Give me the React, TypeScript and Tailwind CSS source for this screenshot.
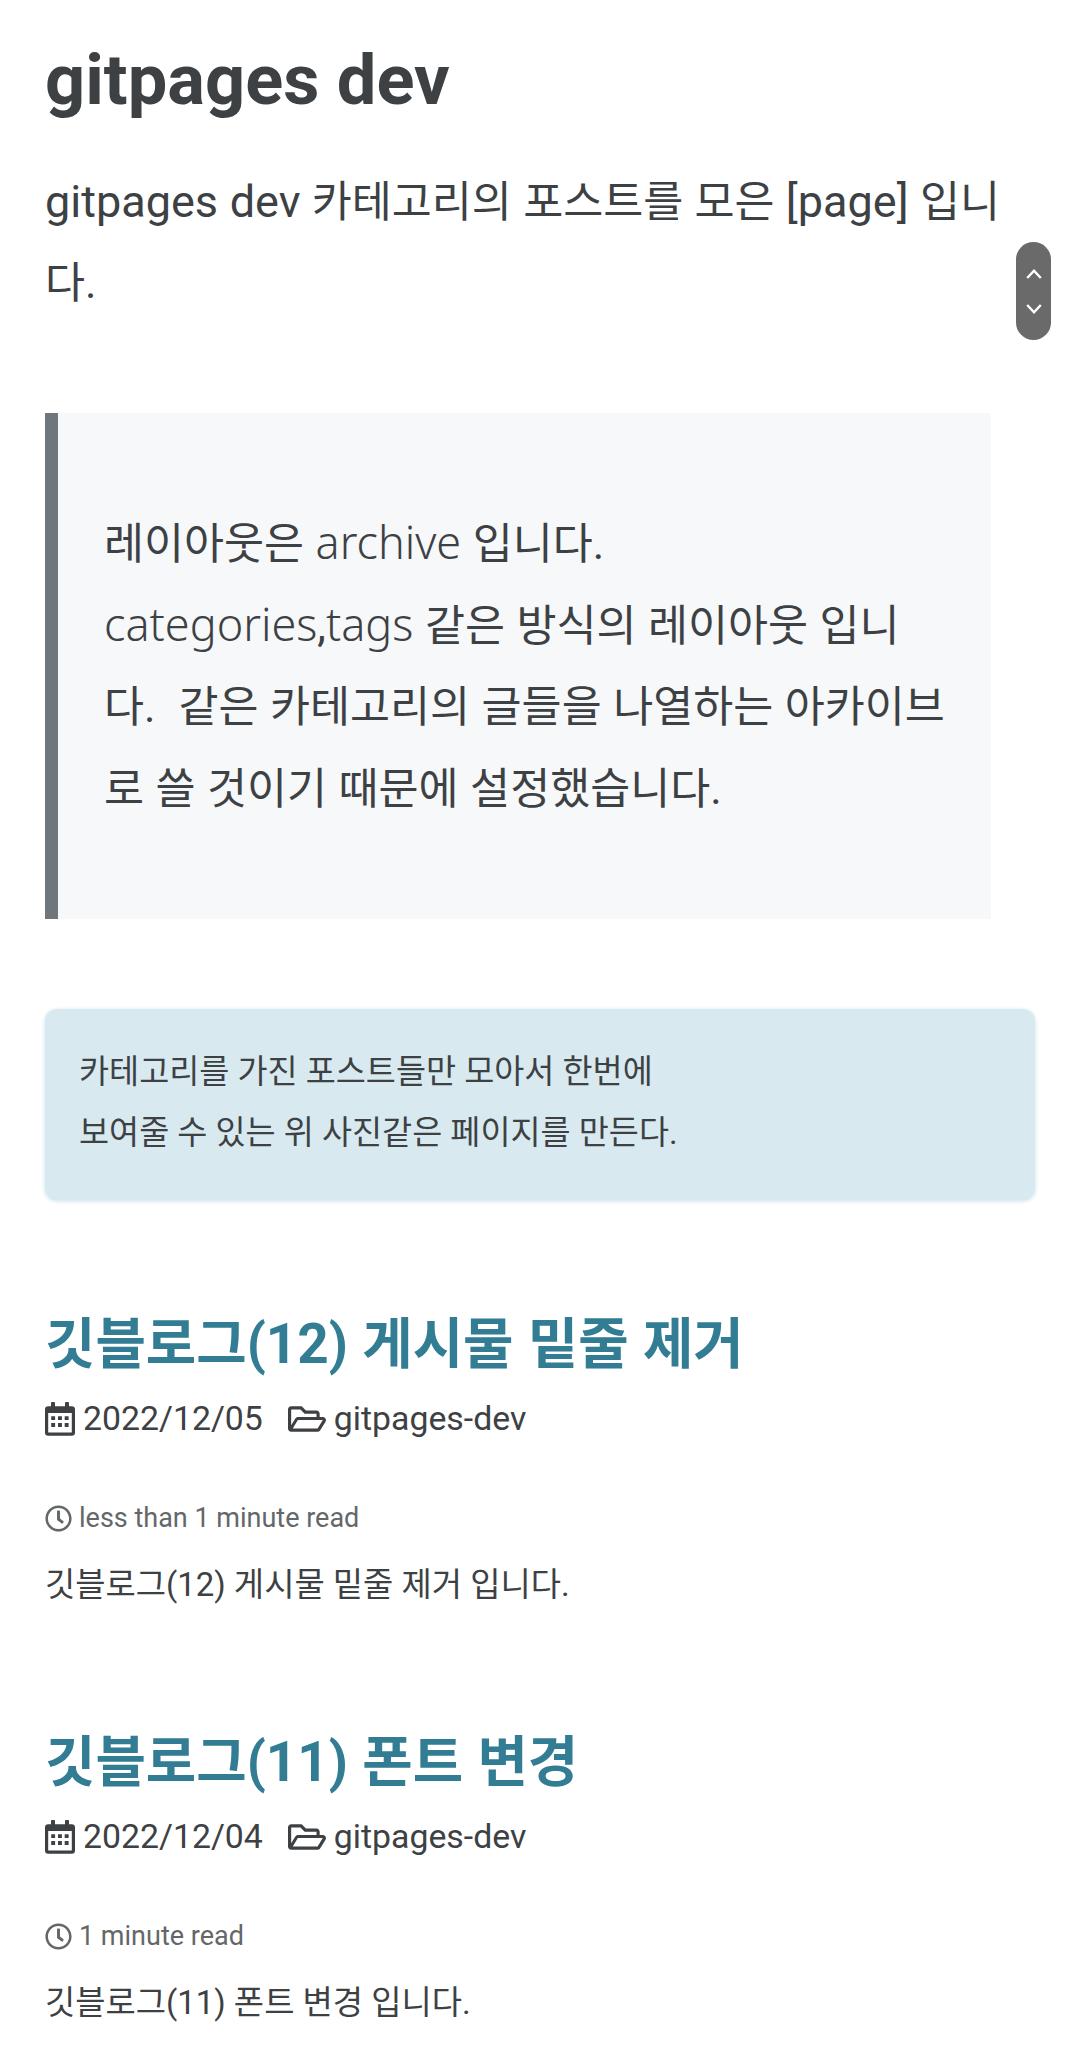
import React from 'react';
import { FaRegFolderOpen, FaRegClock } from 'react-icons/fa';

function CalendarIcon({ className }: { className?: string }) {
  return (
    <svg className={className} viewBox="0 0 30 34" fill="currentColor">
      <path
        fillRule="evenodd"
        d="M6 1Q6 0 7 0H9Q10 0 10 1V4.3H20V1Q20 0 21 0H23Q24 0 24 1V4.3H26.8Q30 4.3 30 7.5V30.6Q30 33.8 26.8 33.8H3.2Q0 33.8 0 30.6V7.5Q0 4.3 3.2 4.3H6ZM3.2 11V30Q3.2 30.6 3.8 30.6H26.2Q26.8 30.6 26.8 30V11Z"
      />
      <path d="M6.2 14.2h3.9v3.9H6.2zM13 14.2h3.9v3.9H13zM19.7 14.2h3.9v3.9h-3.9zM6.2 21h3.9v3.9H6.2zM13 21h3.9v3.9H13zM19.7 21h3.9v3.9h-3.9z" />
    </svg>
  );
}

function Post({ title, date, read, text }: { title: string; date: string; read: string; text: string }) {
  return (
    <article className="h-[418px]">
      <h2 className="whitespace-nowrap text-[54.8px] leading-[64px] font-bold text-[#327d94] [word-spacing:0.7px]">{title}</h2>
      <div className="mt-[23px] flex h-[40px] items-center whitespace-nowrap text-[33.8px] leading-[40px]">
        <CalendarIcon className="mr-[8px] h-[34px] w-[30px]" />
        <span>{date}</span>
        <FaRegFolderOpen className="mr-[8px] ml-[25px] size-[38px]" />
        <span>gitpages-dev</span>
      </div>
      <div className="mt-[61px] flex h-[36px] items-center whitespace-nowrap text-[27px] text-[#646769]">
        <FaRegClock className="mr-[7px] size-[27px]" />
        <span>{read}</span>
      </div>
      <p className="mt-[27px] whitespace-nowrap text-[32.9px] leading-[44px]">{text}</p>
    </article>
  );
}

const light = "font-['Noto_Sans'] text-[45px] leading-none font-light";

export default function App() {
  return (
    <main className="relative h-[2071px] w-[1080px] overflow-hidden bg-white px-[45px] pt-[38px] font-[Roboto,'Noto_Sans_CJK_KR',sans-serif] text-[#3d4144]">
      <h1 className="text-[70.4px] leading-[84px] font-bold">gitpages dev</h1>
      <div className="mt-[40px] text-[43.5px] leading-[81px] whitespace-nowrap [word-spacing:0.5px]">
        <p>
          <span className="text-[45px] leading-none">gitpages dev</span> 카테고리의 포스트를 모은{' '}
          <span className="text-[45px] leading-none">[page]</span> 입니
        </p>
        <p>다.</p>
      </div>
      <blockquote className="mt-[89px] h-[506px] w-[946px] border-l-[13px] border-[#6f777d] bg-[#f7f8fa] pt-[91px] pl-[46px] text-[43.5px] leading-[81.5px] whitespace-nowrap [word-spacing:0.7px]">
        <p>레이아웃은 <span className={light}>archive</span> 입니다.</p>
        <p><span className={light}>categories</span>,<span className={light}>tags</span> 같은 방식의 레이아웃 입니</p>
        <p>다.&nbsp; 같은 카테고리의 글들을 나열하는 아카이브</p>
        <p>로 쓸 것이기 때문에 설정했습니다.</p>
      </blockquote>
      <div className="mt-[90px] h-[191px] rounded-[12px] bg-[#d8eaf0] px-[34px] pt-[33px] text-[32.7px] leading-[61px] shadow-[0_1px_4px_#c5e0e9]">
        <p>카테고리를 가진 포스트들만 모아서 한번에</p>
        <p>보여줄 수 있는 위 사진같은 페이지를 만든다.</p>
      </div>
      <section className="mt-[112px]">
        <Post title="깃블로그(12) 게시물 밑줄 제거" date="2022/12/05" read="less than 1 minute read" text="깃블로그(12) 게시물 밑줄 제거 입니다." />
        <Post title="깃블로그(11) 폰트 변경" date="2022/12/04" read="1 minute read" text="깃블로그(11) 폰트 변경 입니다." />
      </section>
      <div className="absolute top-[242px] left-[1016px] flex h-[98px] w-[35px] flex-col items-center justify-center gap-[25px] rounded-full bg-[#6a6a6a] text-white">
        <svg width="16" height="10" viewBox="0 0 16 10" fill="none" stroke="currentColor" strokeWidth="2.4"><path d="M1.2 9 8 1.8 14.8 9" /></svg>
        <svg width="16" height="10" viewBox="0 0 16 10" fill="none" stroke="currentColor" strokeWidth="2.4"><path d="M1.2 1 8 8.2 14.8 1" /></svg>
      </div>
    </main>
  );
}
